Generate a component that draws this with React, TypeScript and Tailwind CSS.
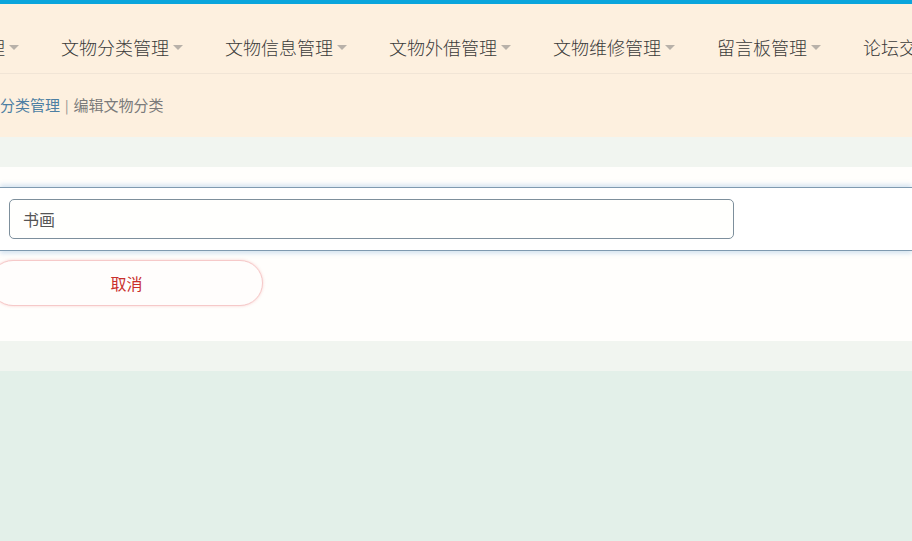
const navItems = [
  "管理员管理",
  "文物分类管理",
  "文物信息管理",
  "文物外借管理",
  "文物维修管理",
  "留言板管理",
  "论坛交流管理",
]

const NavCaret = () => (
  <svg width="10" height="6" viewBox="0 0 10 6" className="ml-1 mt-[2px]">
    <path d="M0 0 L10 0 L5 5 Z" fill="#b8b1a9" />
  </svg>
)

export default function App() {
  return (
    <div
      className="relative h-[541px] w-[912px] overflow-hidden bg-[#e3f0e9] text-[#333]"
      style={{ fontFamily: '"Noto Sans CJK SC", "Noto Sans", sans-serif' }}
    >
      <div className="h-[4px] bg-[#0aa5dc] shadow-[0_1px_3px_rgba(0,0,0,0.15)]" />
      <nav className="flex h-[70px] items-center border-b border-[#f1e5d6] bg-[#fdf0df] pt-[17px] shadow-[0_1px_2px_rgba(0,0,0,0.03)]">
        <ul className="-ml-[106px] flex shrink-0 whitespace-nowrap">
          {navItems.map((item) => (
            <li
              key={item}
              className="flex items-center px-[21px] text-[18px] font-light leading-none text-[#3a3a3a]"
            >
              <span>{item}</span>
              <NavCaret />
            </li>
          ))}
        </ul>
      </nav>
      <div className="flex h-[63px] items-center bg-[#fdf0df] text-[15px]">
        <div className="-ml-[30px] flex items-center whitespace-nowrap">
          <span className="text-[#4d7fa3]">文物分类管理</span>
          <span className="mx-[5px] text-[13px] text-[#8a8a8a]">|</span>
          <span className="text-[#7a7a7a]">编辑文物分类</span>
        </div>
      </div>
      <div className="bg-[#f1f5f0] py-[30px]">
        <div className="bg-[#fffefc] pb-[35px] pt-[20px]">
          <div className="border-y border-[#7f9ab0] bg-white py-[11px] shadow-[0_-3px_4px_rgba(120,170,220,0.25),0_3px_4px_rgba(120,170,220,0.25)]">
            <div className="ml-[9px] flex h-[40px] w-[725px] items-center rounded-[5px] border border-[#7d8f9c] bg-[#fffffd] px-[13px] text-[16px] text-[#555]">
              书画
            </div>
          </div>
          <div className="mt-[9px]">
            <button className="-ml-[10px] flex h-[46px] w-[273px] items-center justify-center rounded-full border border-[#f6c9c9] bg-[#fffdfc] text-[16px] text-[#c9302c] shadow-[0_0_3px_rgba(240,150,150,0.45)]">
              取消
            </button>
          </div>
        </div>
      </div>
    </div>
  )
}
